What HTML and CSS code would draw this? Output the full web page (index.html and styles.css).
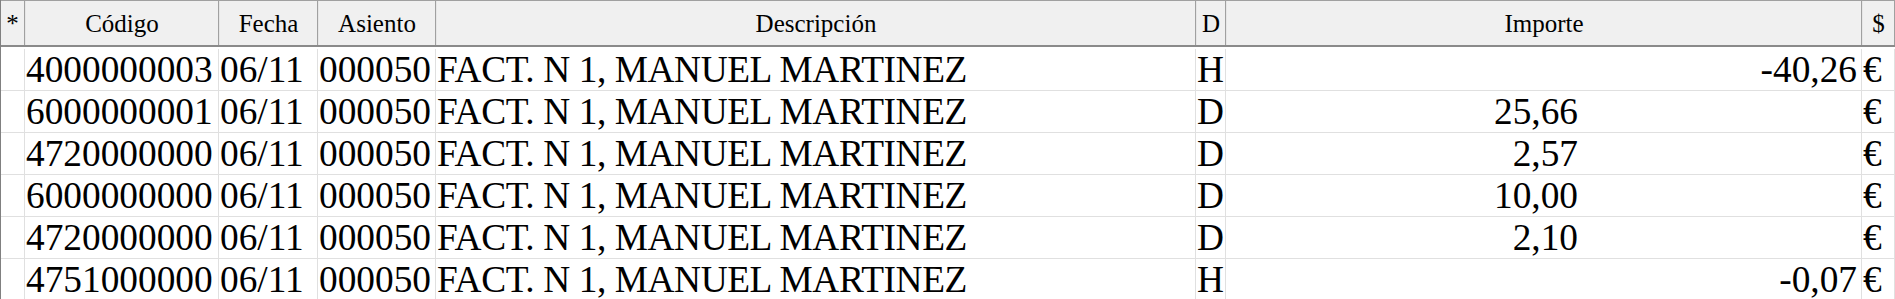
FILE: index.html
```html
<!DOCTYPE html>
<html lang="es">
<head>
<meta charset="utf-8">
<link rel="stylesheet" href="styles.css">
<title>Apuntes</title>
</head>
<body>
<div class="grid">
  <div class="row head">
    <div class="hc">*</div>
    <div class="hc">Código</div>
    <div class="hc">Fecha</div>
    <div class="hc">Asiento</div>
    <div class="hc">Descripción</div>
    <div class="hc">D</div>
    <div class="hc">Importe</div>
    <div class="hc">$</div>
  </div>
  <div class="body">
    <div class="row data">
      <div class="c"></div><div class="c">4000000003</div><div class="c">06/11</div><div class="c">000050</div><div class="c desc">FACT. N 1, MANUEL MARTINEZ</div><div class="c">H</div>
      <div class="c imp"><span class="debe"></span><span class="haber">-40,26</span></div><div class="c">€</div>
    </div>
    <div class="row data">
      <div class="c"></div><div class="c">6000000001</div><div class="c">06/11</div><div class="c">000050</div><div class="c desc">FACT. N 1, MANUEL MARTINEZ</div><div class="c">D</div>
      <div class="c imp"><span class="debe">25,66</span><span class="haber"></span></div><div class="c">€</div>
    </div>
    <div class="row data">
      <div class="c"></div><div class="c">4720000000</div><div class="c">06/11</div><div class="c">000050</div><div class="c desc">FACT. N 1, MANUEL MARTINEZ</div><div class="c">D</div>
      <div class="c imp"><span class="debe">2,57</span><span class="haber"></span></div><div class="c">€</div>
    </div>
    <div class="row data">
      <div class="c"></div><div class="c">6000000000</div><div class="c">06/11</div><div class="c">000050</div><div class="c desc">FACT. N 1, MANUEL MARTINEZ</div><div class="c">D</div>
      <div class="c imp"><span class="debe">10,00</span><span class="haber"></span></div><div class="c">€</div>
    </div>
    <div class="row data">
      <div class="c"></div><div class="c">4720000000</div><div class="c">06/11</div><div class="c">000050</div><div class="c desc">FACT. N 1, MANUEL MARTINEZ</div><div class="c">D</div>
      <div class="c imp"><span class="debe">2,10</span><span class="haber"></span></div><div class="c">€</div>
    </div>
    <div class="row data">
      <div class="c"></div><div class="c">4751000000</div><div class="c">06/11</div><div class="c">000050</div><div class="c desc">FACT. N 1, MANUEL MARTINEZ</div><div class="c">H</div>
      <div class="c imp"><span class="debe"></span><span class="haber">-0,07</span></div><div class="c">€</div>
    </div>
  </div>
</div>
</body>
</html>
```

FILE: styles.css
```css
html, body {
  margin: 0;
  padding: 0;
  background: #ffffff;
  overflow: hidden;
}
body {
  font-family: "Liberation Serif", "Times New Roman", serif;
  color: #000000;
}
.grid {
  width: 1895px;
  border-left: 1px solid #808080;
  box-sizing: border-box;
}
.row {
  display: grid;
  grid-template-columns: 24px 194px 99px 118px 760px 30px 636px 33px;
}
.head {
  border-top: 1px solid #a0a0a0;
  border-bottom: 2px solid #8a8a8a;
  background: #f0f0f0;
}
.hc {
  box-sizing: border-box;
  height: 44px;
  padding-top: 1px;
  line-height: 43px;
  font-size: 25px;
  text-align: center;
  border-right: 1px solid #a0a0a0;
  border-left: 1px solid #e6e6e6;
  white-space: nowrap;
  overflow: hidden;
}
.hc:first-child {
  border-left: none;
}
.body {
  padding-top: 2px;
}
.data {
  border-bottom: 1px solid #e0e0e0;
}
.c {
  box-sizing: border-box;
  height: 41px;
  line-height: 41px;
  font-size: 37.33px;
  padding-left: 1px;
  border-right: 1px solid #e0e0e0;
  white-space: nowrap;
  overflow: hidden;
}
.desc {
  letter-spacing: -0.4px;
}
.imp {
  display: grid;
  grid-template-columns: 352px 1fr;
  padding-left: 0;
}
.debe, .haber {
  text-align: right;
}
.haber {
  padding-right: 4px;
}
```
